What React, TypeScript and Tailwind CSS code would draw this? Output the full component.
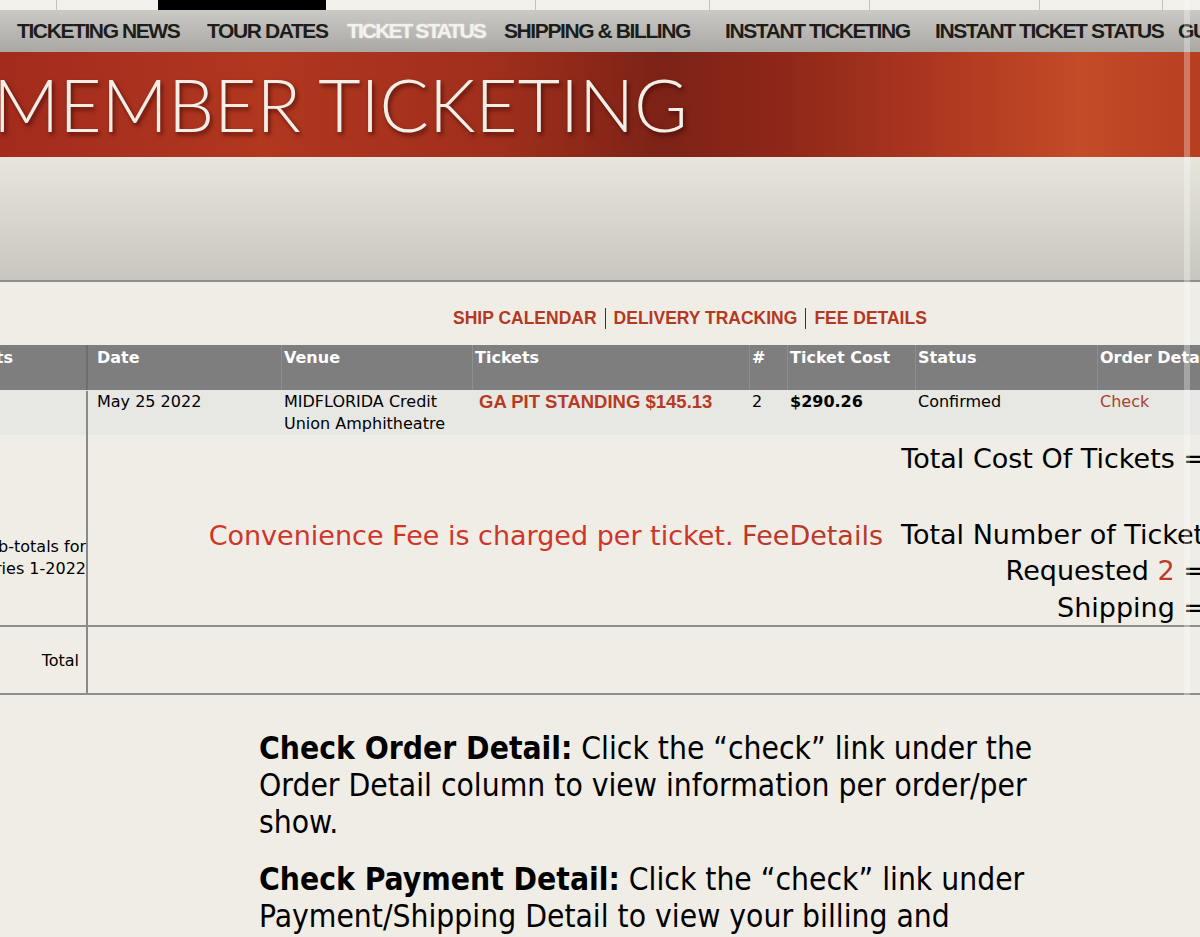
const navItems = [
  { label: "TICKETING NEWS", w: "w-[190px]" },
  { label: "TOUR DATES", w: "w-[140px]" },
  { label: "TICKET STATUS", w: "w-[157px]" },
  { label: "SHIPPING & BILLING", w: "w-[221px]" },
  { label: "INSTANT TICKETING", w: "w-[210px]" },
  { label: "INSTANT TICKET STATUS", w: "w-[243px]" },
  { label: "GUIDELINES", w: "w-[160px]" },
];

const cols =
  "grid grid-cols-[88px_193px_191px_277px_38px_128px_182px_1fr]";

export default function App() {
  return (
    <div className="relative w-[1200px] h-[937px] overflow-hidden bg-[#efede6] font-['DejaVu_Sans',sans-serif] text-black">
      {/* top strip */}
      <div className="flex h-[10px] bg-[#f1f0eb]">
        <div className="w-[57px] border-r border-[#c4c2bb]" />
        <div className="w-[101px]" />
        <div className="w-[168px] bg-black" />
        <div className="w-[210px] border-r border-[#c4c2bb]" />
        <div className="w-[174px] border-r border-[#c4c2bb]" />
        <div className="w-[160px] border-r border-[#c4c2bb]" />
        <div className="w-[170px] border-r border-[#c4c2bb]" />
        <div className="w-[123px] border-r border-[#c4c2bb]" />
      </div>

      {/* nav */}
      <div className="flex h-[42px] items-center whitespace-nowrap bg-gradient-to-b from-[#cbc9c4] to-[#a9a8a4] pl-[17px] font-['Liberation_Sans',Arial,sans-serif] text-[21px] font-bold tracking-[-1.4px] text-[#1d1d1b]">
        {navItems.map((item) => (
          <span
            key={item.label}
            className={`${item.w} shrink-0 ${
              item.label === "TICKET STATUS"
                ? "tracking-[-1.9px] text-[#f4f2ec] [text-shadow:0_0_2px_rgba(255,255,255,0.6)]"
                : ""
            }`}
          >
            {item.label}
          </span>
        ))}
      </div>

      {/* banner */}
      <div className="flex h-[105px] items-center overflow-hidden bg-[linear-gradient(90deg,#a32b1d_0%,#b1371f_22%,#9f2e1c_42%,#7d2216_55%,#8e2719_65%,#ad3720_78%,#c44b27_90%,#b83e22_100%)]">
        <span className="-ml-[7px] whitespace-nowrap font-['Lato',sans-serif] text-[73px] font-light leading-none text-[#f3efe6] [text-shadow:2px_3px_4px_rgba(40,0,0,0.6)]">
          MEMBER TICKETING
        </span>
      </div>

      {/* gray panel */}
      <div className="h-[125px] border-b-2 border-[#8d8d89] bg-gradient-to-b from-[#e7e5dc] to-[#c9c7bd]" />

      {/* links */}
      <div className="flex h-[63px] items-center gap-[8px] pl-[453px] pt-[9px] font-['Liberation_Sans',Arial,sans-serif] text-[17.5px] font-bold text-[#b5381f]">
        <span>SHIP CALENDAR</span>
        <span className="h-[21px] w-px bg-[#333]" />
        <span>DELIVERY TRACKING</span>
        <span className="h-[21px] w-px bg-[#333]" />
        <span>FEE DETAILS</span>
      </div>

      {/* table header */}
      <div
        className={`${cols} h-[45px] whitespace-nowrap bg-[#7e7e7e] text-[16px] font-bold leading-[20px] text-white`}
      >
        <div className="flex justify-end overflow-hidden border-r-2 border-[#6e6e6e] pr-[73px] pt-[3px]">
          <span className="shrink-0">Events</span>
        </div>
        <div className="pl-[9px] pt-[3px]">Date</div>
        <div className="border-l border-[#8e8e8e] pl-[2px] pt-[3px]">Venue</div>
        <div className="border-l border-[#8e8e8e] pl-[2px] pt-[3px]">Tickets</div>
        <div className="border-l border-[#8e8e8e] pl-[2px] pt-[3px]">#</div>
        <div className="border-l border-[#8e8e8e] pl-[2px] pt-[3px]">Ticket Cost</div>
        <div className="border-l border-[#8e8e8e] pl-[2px] pt-[3px]">Status</div>
        <div className="border-l border-[#8e8e8e] pl-[2px] pt-[3px]">Order Detail</div>
      </div>

      {/* data row */}
      <div
        className={`${cols} h-[45px] whitespace-nowrap bg-[#e7e7e4] pt-[1px] text-[16px] leading-[22px]`}
      >
        <div className="border-r-2 border-[#8a8a8a]" />
        <div className="pl-[9px]">May 25 2022</div>
        <div className="pl-[3px]">
          MIDFLORIDA Credit
          <br />
          Union Amphitheatre
        </div>
        <div className="pl-[7px] font-['Liberation_Sans',Arial,sans-serif] text-[18.5px] font-bold text-[#b83a22]">
          GA PIT STANDING $145.13
        </div>
        <div className="pl-[3px]">2</div>
        <div className="pl-[3px] font-bold">$290.26</div>
        <div className="pl-[3px]">Confirmed</div>
        <div className="pl-[3px] text-[#a8412e]">Check</div>
      </div>

      {/* subtotals */}
      <div className="flex h-[192px] border-b-2 border-[#8e8e8a]">
        <div className="flex w-[88px] shrink-0 items-center justify-end overflow-hidden border-r-2 border-[#8a8a8a] pt-[56px] text-[16px] leading-[22px]">
          <div className="shrink-0 text-right">
            Sub-totals for
            <br />
            Series 1-2022
          </div>
        </div>
        <div className="flex flex-1 items-center justify-end pr-[18px] pt-[12px] text-[27px] text-[#d0352a]">
          <span className="whitespace-nowrap">
            Convenience Fee is charged per ticket.{" "}
            <span className="text-[#b83a2a]">FeeDetails</span>
          </span>
        </div>
        <div className="w-[305px] shrink-0 whitespace-nowrap pt-[5px] text-right text-[27px] leading-[37px] -mr-[6px]">
          <div>Total Cost Of Tickets =</div>
          <div>&nbsp;</div>
          <div className="-mr-[12px] leading-[35px] pt-[3px]">Total Number of Tickets</div>
          <div>
            Requested <span className="text-[#c0392b]">2</span> =
          </div>
          <div>Shipping =</div>
        </div>
      </div>

      {/* total */}
      <div className="flex h-[68px] border-b-2 border-[#8e8e8a]">
        <div className="flex w-[88px] items-center justify-end border-r-2 border-[#8a8a8a] pr-[7px] pt-[2px] text-[16px]">
          Total
        </div>
      </div>

      {/* help text */}
      <div className="ml-[259px] mt-[35px] w-[790px] font-['DejaVu_Sans_Condensed','DejaVu_Sans',sans-serif] text-[31.5px] leading-[37px] font-stretch-condensed">
        <p>
          <b>Check Order Detail:</b> Click the “check” link under the Order
          Detail column to view information per order/per show.
        </p>
        <p className="mt-[20px]">
          <b>Check Payment Detail:</b> Click the “check” link under
          Payment/Shipping Detail to view your billing and shipping
          information.
        </p>
      </div>

      {/* light edge strip */}
      <div className="absolute left-[1184px] top-0 h-[695px] w-[6px] bg-white/30" />
    </div>
  );
}
